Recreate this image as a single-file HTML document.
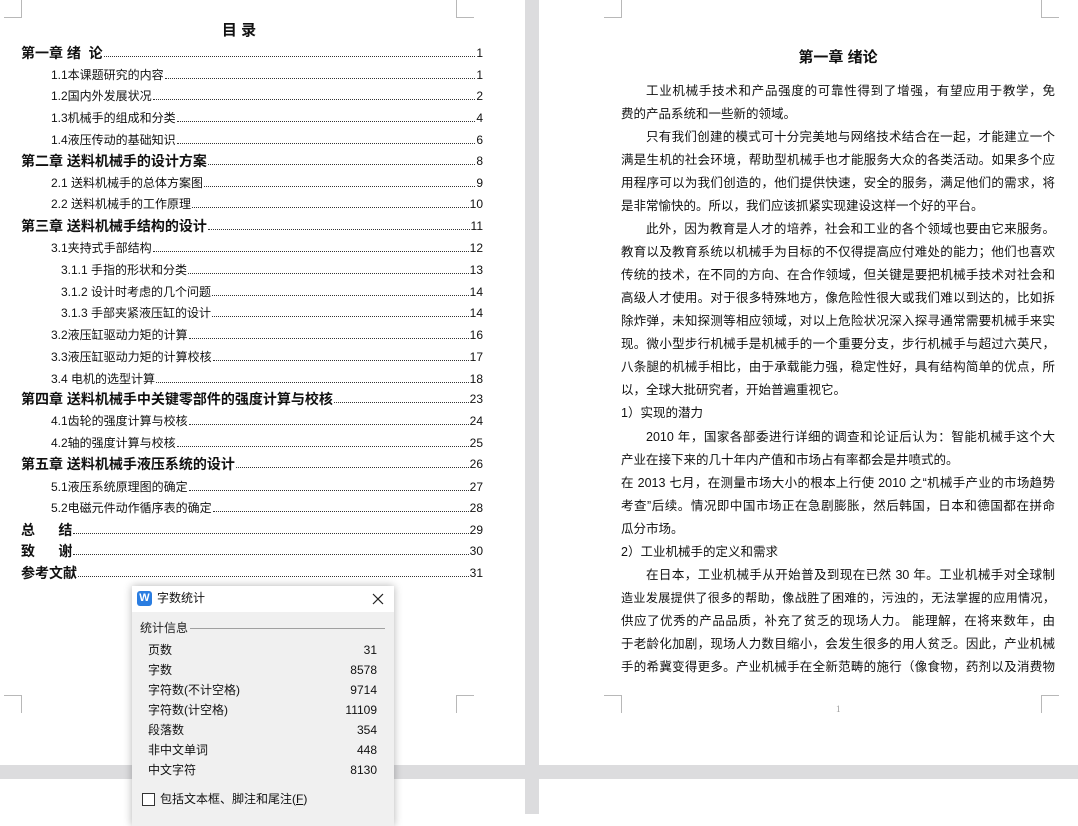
<!DOCTYPE html>
<html lang="zh-CN"><head><meta charset="utf-8"><style>
*{margin:0;padding:0;box-sizing:border-box}
body{width:1078px;height:814px;overflow:hidden;background:#fff;position:relative;font-family:"Liberation Sans","Noto Sans CJK SC",sans-serif;color:#111}
.g{position:absolute;background:#dcdcde}
.c{position:absolute;background:#b8b8b8}
.toc{position:absolute;left:21px;width:462px;display:flex;align-items:flex-end;height:18px;font-size:12px;line-height:18px}
.toc .f{flex:1;border-bottom:1px dotted #333;margin:0 1px 5px}
.toc.h{font-size:14px;font-weight:bold}
.toc.h .n{font-size:12px;font-weight:normal}
.p{position:absolute;left:621px;width:434px;font-size:12.5px;line-height:18px;height:18px;white-space:nowrap;overflow:hidden}
.j{text-align:justify;text-align-last:justify;white-space:normal}
.i{padding-left:25px}
.dlg{position:absolute;left:132px;top:586px;width:262px;height:240px;background:#f0f0f0;box-shadow:0 0 8px rgba(0,0,0,.3);font-size:12px}
.row{position:absolute;left:16px;width:229px;display:flex;justify-content:space-between;line-height:16px}
</style></head><body>
<div class="g" style="left:525px;top:0;width:14px;height:814px"></div>
<div class="g" style="left:0;top:765px;width:1078px;height:14px"></div>
<div class="c" style="left:21px;top:0;width:1px;height:18px"></div><div class="c" style="left:4px;top:17px;width:18px;height:1px"></div>
<div class="c" style="left:456px;top:0;width:1px;height:18px"></div><div class="c" style="left:456px;top:17px;width:18px;height:1px"></div>
<div class="c" style="left:456px;top:695px;width:1px;height:18px"></div><div class="c" style="left:456px;top:695px;width:18px;height:1px"></div>
<div class="c" style="left:21px;top:695px;width:1px;height:18px"></div><div class="c" style="left:4px;top:695px;width:18px;height:1px"></div>
<div class="c" style="left:621px;top:0;width:1px;height:18px"></div><div class="c" style="left:604px;top:17px;width:18px;height:1px"></div>
<div class="c" style="left:1041px;top:0;width:1px;height:18px"></div><div class="c" style="left:1041px;top:17px;width:18px;height:1px"></div>
<div class="c" style="left:621px;top:695px;width:1px;height:18px"></div><div class="c" style="left:604px;top:695px;width:18px;height:1px"></div>
<div class="c" style="left:1041px;top:695px;width:1px;height:18px"></div><div class="c" style="left:1041px;top:695px;width:18px;height:1px"></div>

<div style="position:absolute;left:0;width:478px;top:19px;text-align:center;font-size:15px;font-weight:bold">目 录</div>
<div class="toc h" style="top:44px"><span>第一章 绪&nbsp;&nbsp;论</span><span class="f"></span><span class="n">1</span></div>
<div class="toc" style="top:66px;padding-left:30px"><span>1.1本课题研究的内容</span><span class="f"></span><span>1</span></div>
<div class="toc" style="top:87px;padding-left:30px"><span>1.2国内外发展状况</span><span class="f"></span><span>2</span></div>
<div class="toc" style="top:109px;padding-left:30px"><span>1.3机械手的组成和分类</span><span class="f"></span><span>4</span></div>
<div class="toc" style="top:131px;padding-left:30px"><span>1.4液压传动的基础知识</span><span class="f"></span><span>6</span></div>
<div class="toc h" style="top:152px"><span>第二章 送料机械手的设计方案</span><span class="f"></span><span class="n">8</span></div>
<div class="toc" style="top:174px;padding-left:30px"><span>2.1 送料机械手的总体方案图</span><span class="f"></span><span>9</span></div>
<div class="toc" style="top:195px;padding-left:30px"><span>2.2 送料机械手的工作原理</span><span class="f"></span><span>10</span></div>
<div class="toc h" style="top:217px"><span>第三章 送料机械手结构的设计</span><span class="f"></span><span class="n">11</span></div>
<div class="toc" style="top:239px;padding-left:30px"><span>3.1夹持式手部结构</span><span class="f"></span><span>12</span></div>
<div class="toc" style="top:261px;padding-left:40px"><span>3.1.1 手指的形状和分类</span><span class="f"></span><span>13</span></div>
<div class="toc" style="top:283px;padding-left:40px"><span>3.1.2 设计时考虑的几个问题</span><span class="f"></span><span>14</span></div>
<div class="toc" style="top:304px;padding-left:40px"><span>3.1.3 手部夹紧液压缸的设计</span><span class="f"></span><span>14</span></div>
<div class="toc" style="top:326px;padding-left:30px"><span>3.2液压缸驱动力矩的计算</span><span class="f"></span><span>16</span></div>
<div class="toc" style="top:348px;padding-left:30px"><span>3.3液压缸驱动力矩的计算校核</span><span class="f"></span><span>17</span></div>
<div class="toc" style="top:370px;padding-left:30px"><span>3.4 电机的选型计算</span><span class="f"></span><span>18</span></div>
<div class="toc h" style="top:390px"><span>第四章 送料机械手中关键零部件的强度计算与校核</span><span class="f"></span><span class="n">23</span></div>
<div class="toc" style="top:412px;padding-left:30px"><span>4.1齿轮的强度计算与校核</span><span class="f"></span><span>24</span></div>
<div class="toc" style="top:434px;padding-left:30px"><span>4.2轴的强度计算与校核</span><span class="f"></span><span>25</span></div>
<div class="toc h" style="top:455px"><span>第五章 送料机械手液压系统的设计</span><span class="f"></span><span class="n">26</span></div>
<div class="toc" style="top:478px;padding-left:30px"><span>5.1液压系统原理图的确定</span><span class="f"></span><span>27</span></div>
<div class="toc" style="top:499px;padding-left:30px"><span>5.2电磁元件动作循序表的确定</span><span class="f"></span><span>28</span></div>
<div class="toc h" style="top:521px"><span>总&nbsp;&nbsp;&nbsp;&nbsp;&nbsp;&nbsp;结</span><span class="f"></span><span class="n">29</span></div>
<div class="toc h" style="top:542px"><span>致&nbsp;&nbsp;&nbsp;&nbsp;&nbsp;&nbsp;谢</span><span class="f"></span><span class="n">30</span></div>
<div class="toc h" style="top:564px"><span>参考文献</span><span class="f"></span><span class="n">31</span></div>

<div style="position:absolute;left:621px;width:434px;top:46px;text-align:center;font-size:15px;font-weight:bold">第一章 绪论</div>
<div class="p j i" style="top:82px">工业机械手技术和产品强度的可靠性得到了增强，有望应用于教学，免</div>
<div class="p" style="top:105px">费的产品系统和一些新的领域。</div>
<div class="p j i" style="top:128px">只有我们创建的模式可十分完美地与网络技术结合在一起，才能建立一个</div>
<div class="p j" style="top:151px">满是生机的社会环境，帮助型机械手也才能服务大众的各类活动。如果多个应</div>
<div class="p j" style="top:174px">用程序可以为我们创造的，他们提供快速，安全的服务，满足他们的需求，将</div>
<div class="p" style="top:197px">是非常愉快的。所以，我们应该抓紧实现建设这样一个好的平台。</div>
<div class="p j i" style="top:220px">此外，因为教育是人才的培养，社会和工业的各个领域也要由它来服务。</div>
<div class="p j" style="top:243px">教育以及教育系统以机械手为目标的不仅得提高应付难处的能力；他们也喜欢</div>
<div class="p j" style="top:266px">传统的技术，在不同的方向、在合作领域，但关键是要把机械手技术对社会和</div>
<div class="p j" style="top:289px">高级人才使用。对于很多特殊地方，像危险性很大或我们难以到达的，比如拆</div>
<div class="p j" style="top:312px">除炸弹，未知探测等相应领域，对以上危险状况深入探寻通常需要机械手来实</div>
<div class="p j" style="top:335px">现。微小型步行机械手是机械手的一个重要分支，步行机械手与超过六英尺，</div>
<div class="p j" style="top:358px">八条腿的机械手相比，由于承载能力强，稳定性好，具有结构简单的优点，所</div>
<div class="p" style="top:381px">以，全球大批研究者，开始普遍重视它。</div>
<div class="p" style="top:404px">1）实现的潜力</div>
<div class="p j i" style="top:428px">2010 年，国家各部委进行详细的调查和论证后认为：智能机械手这个大</div>
<div class="p" style="top:451px">产业在接下来的几十年内产值和市场占有率都会是井喷式的。</div>
<div class="p j" style="top:474px">在 2013 七月，在测量市场大小的根本上行使 2010 之“机械手产业的市场趋势</div>
<div class="p j" style="top:497px">考查”后续。情况即中国市场正在急剧膨胀，然后韩国，日本和德国都在拼命</div>
<div class="p" style="top:520px">瓜分市场。</div>
<div class="p" style="top:543px">2）工业机械手的定义和需求</div>
<div class="p j i" style="top:566px">在日本，工业机械手从开始普及到现在已然 30 年。工业机械手对全球制</div>
<div class="p j" style="top:589px;font-size:12.1px">造业发展提供了很多的帮助，像战胜了困难的，污浊的，无法掌握的应用情况，</div>
<div class="p j" style="top:612px">供应了优秀的产品品质，补充了贫乏的现场人力。 能理解，在将来数年，由</div>
<div class="p j" style="top:635px">于老龄化加剧，现场人力数目缩小，会发生很多的用人贫乏。因此，产业机械</div>
<div class="p j" style="top:658px">手的希冀变得更多。产业机械手在全新范畴的施行（像食物，药剂以及消费物</div>
<div style="position:absolute;left:836px;top:704px;font-size:9px;color:#999;font-family:'Liberation Serif',serif">1</div>

<div class="dlg">
 <div style="position:absolute;left:0;top:0;width:262px;height:26px;background:#fff"></div>
 <div style="position:absolute;left:5px;top:5px;width:15px;height:15px;background:#2a7de1;border-radius:3px;color:#fff;font-weight:bold;font-size:11px;line-height:15px;text-align:center">W</div>
 <div style="position:absolute;left:25px;top:4px;font-size:12px;line-height:17px">字数统计</div>
 <svg style="position:absolute;left:240px;top:7px" width="12" height="12" viewBox="0 0 12 12"><path d="M1 1L11 11M11 1L1 11" stroke="#222" stroke-width="1.2"/></svg>
 <div style="position:absolute;left:8px;top:34px;line-height:16px;color:#222">统计信息</div>
 <div style="position:absolute;left:58px;top:42px;width:195px;height:1px;background:#a0a0a0"></div>
 <div class="row" style="top:56px"><span>页数</span><span>31</span></div>
 <div class="row" style="top:76px"><span>字数</span><span>8578</span></div>
 <div class="row" style="top:96px"><span>字符数(不计空格)</span><span>9714</span></div>
 <div class="row" style="top:116px"><span>字符数(计空格)</span><span>11109</span></div>
 <div class="row" style="top:136px"><span>段落数</span><span>354</span></div>
 <div class="row" style="top:156px"><span>非中文单词</span><span>448</span></div>
 <div class="row" style="top:176px"><span>中文字符</span><span>8130</span></div>
 <div style="position:absolute;left:10px;top:207px;width:13px;height:13px;border:1px solid #333;background:#fff"></div>
 <div style="position:absolute;left:28px;top:205px;line-height:16px">包括文本框、脚注和尾注(<u>F</u>)</div>
</div>
</body></html>
